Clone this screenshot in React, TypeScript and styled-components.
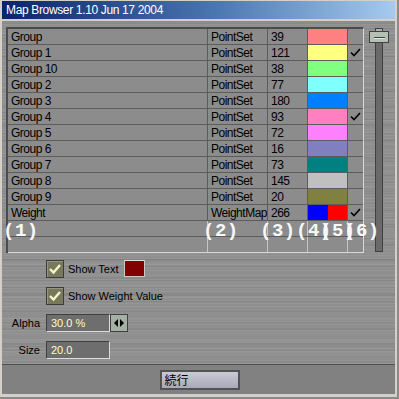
import React from 'react';
import styled, { createGlobalStyle } from 'styled-components';

const Global = createGlobalStyle`
  html, body { margin: 0; padding: 0; background: #d4d0c8; }
  body { width: 399px; height: 399px; overflow: hidden; }
`;

const Window = styled.div`
  box-sizing: border-box;
  width: 399px;
  height: 399px;
  background: #d4d0c8;
  padding: 1px 2px 3px 2px;
  border-right: 2px solid #8a8a8a;
  border-bottom: 2px solid #8a8a8a;
  display: flex;
  flex-direction: column;
  font-family: "Liberation Sans", Arial, sans-serif;
`;

const TitleBar = styled.div`
  height: 18px;
  margin-bottom: 2px;
  padding-left: 4px;
  background: linear-gradient(90deg, #0a246a 0%, #4a78b0 55%, #a6caf0 100%);
  color: #ffffff;
  font-size: 12px;
  letter-spacing: -0.35px;
  line-height: 18px;
  white-space: nowrap;
`;

const Body = styled.div`
  flex: 1;
  display: flex;
  flex-direction: column;
  background-color: #8f8f8f;
  background-image:
    repeating-linear-gradient(180deg, rgba(255,255,255,0.05) 0px, rgba(255,255,255,0.05) 1px, transparent 1px, transparent 3px),
    repeating-linear-gradient(180deg, rgba(0,0,0,0.06) 0px, rgba(0,0,0,0.06) 1px, transparent 1px, transparent 7px),
    repeating-linear-gradient(180deg, rgba(255,255,255,0.04) 0px, rgba(255,255,255,0.04) 2px, transparent 2px, transparent 11px),
    repeating-linear-gradient(180deg, rgba(0,0,0,0.04) 0px, rgba(0,0,0,0.04) 3px, transparent 3px, transparent 17px);
`;

const ListArea = styled.div`
  display: flex;
  gap: 5px;
  margin: 6px 0 0 4px;
`;

const Table = styled.div`
  position: relative;
  box-sizing: border-box;
  width: 358px;
  background: #8c8c8c;
  border-top: 2px solid #4c4c4c;
  border-left: 2px solid #4c4c4c;
  border-right: 1px solid #d8d8d8;
`;

const Row = styled.div<{ $last?: boolean }>`
  box-sizing: border-box;
  display: grid;
  grid-template-columns: 200px 60px 40px 40px 15px;
  height: 16px;
  border-bottom: 1px solid ${(p) => (p.$last ? '#d8d8d8' : '#5c5c5c')};
`;

const Cell = styled.div<{ $empty?: boolean; $end?: boolean }>`
  box-sizing: border-box;
  border-right: ${(p) => (p.$end ? 'none' : `1px solid ${p.$empty ? '#c4c4c4' : '#5c5c5c'}`)};
  padding-left: 3px;
  font-size: 12px;
  letter-spacing: -0.5px;
  line-height: 15px;
  color: #000;
  white-space: nowrap;
  overflow: hidden;
  display: flex;
  align-items: center;
  padding-top: 1px;
`;

const ColorCell = styled.div`
  box-sizing: border-box;
  border-right: 1px solid #5c5c5c;
  display: flex;
`;

const Swatch = styled.div<{ $c: string }>`
  flex: 1;
  background: ${(p) => p.$c};
`;

const CheckCell = styled.div`
  display: flex;
  align-items: center;
  justify-content: center;
`;

const Annot = styled.div<{ $x: number }>`
  position: absolute;
  top: 193px;
  left: ${(p) => p.$x}px;
  font-family: "Liberation Mono", "DejaVu Sans Mono", monospace;
  font-weight: bold;
  font-size: 19px;
  line-height: 18px;
  letter-spacing: 0.5px;
  color: #f8f8f8;
  white-space: nowrap;
`;

const Scroll = styled.div`
  width: 20px;
  display: flex;
  flex-direction: column;
  align-items: center;
  margin: 1px 0 1px 0;
`;

const ScrollTab = styled.div`
  box-sizing: border-box;
  width: 8px;
  height: 3px;
  border: 1px solid #404040;
  border-bottom: none;
  background: #aab6aa;
`;

const Thumb = styled.div`
  box-sizing: border-box;
  width: 20px;
  height: 12px;
  border: 1px solid #404040;
  background: #b4c0b4;
  display: flex;
  align-items: center;
  justify-content: center;
  &::after {
    content: '';
    width: 11px;
    height: 1px;
    background: #404040;
    box-shadow: 0 1px 0 #e0e8e0;
  }
`;

const Track = styled.div`
  box-sizing: border-box;
  flex: 1;
  width: 8px;
  background: #6a6a6a;
  border: 1px solid #404040;
  border-top: none;
`;

const Controls = styled.div`
  display: grid;
  grid-template-columns: 38px auto;
  column-gap: 6px;
  row-gap: 9px;
  margin-top: 7px;
  justify-content: start;
`;

const Label = styled.div`
  grid-column: 1;
  font-size: 11px;
  line-height: 18px;
  color: #000;
  text-align: right;
`;

const Line = styled.div`
  grid-column: 2;
  display: flex;
  align-items: center;
  height: 18px;
`;

const CheckBox = styled.div`
  box-sizing: border-box;
  width: 18px;
  height: 18px;
  border: 1px solid #3c3c3c;
  background: #78785f;
  box-shadow: inset 1px 1px 0 #96967e;
  display: flex;
  align-items: center;
  justify-content: center;
  margin-right: 4px;
`;

const CheckText = styled.span`
  font-size: 11px;
  color: #000;
  line-height: 18px;
  margin-right: 5px;
`;

const ColorBox = styled.div<{ $c: string }>`
  box-sizing: border-box;
  width: 21px;
  height: 17px;
  margin-top: -1px;
  background: ${(p) => p.$c};
  border: 1px solid #c8c8c8;
  border-top-color: #e0e0e0;
`;

const Input = styled.div`
  box-sizing: border-box;
  width: 64px;
  height: 18px;
  background: #6e6e6e;
  border-top: 1px solid #404040;
  border-left: 1px solid #404040;
  border-right: 1px solid #dcdcdc;
  border-bottom: 1px solid #dcdcdc;
  color: #ffffc0;
  font-size: 11px;
  line-height: 16px;
  padding-left: 4px;
`;

const ArrowButton = styled.div`
  box-sizing: border-box;
  width: 18px;
  height: 18px;
  background: #a4b0a4;
  border: 1px solid #404040;
  display: flex;
  align-items: center;
  justify-content: center;
`;

const Spacer = styled.div`
  flex: 1;
`;

const BottomBar = styled.div`
  box-sizing: border-box;
  height: 30px;
  border-top: 1px solid #505050;
  background: #818181;
  display: flex;
  justify-content: center;
  padding: 5px 0 0 2px;
`;

const Button = styled.div`
  box-sizing: border-box;
  width: 80px;
  height: 20px;
  border: 2px solid #525252;
  background: linear-gradient(180deg, #cacad6 0%, #a8a8b8 100%);
  font-family: "Noto Sans CJK JP", "Liberation Sans", sans-serif;
  font-size: 12px;
  line-height: 16px;
  color: #000;
  padding-left: 3px;
`;

type RowData = { name: string; type: string; n: string; colors: string[]; check: boolean };

const rows: RowData[] = [
  { name: 'Group', type: 'PointSet', n: '39', colors: ['#ff8080'], check: false },
  { name: 'Group 1', type: 'PointSet', n: '121', colors: ['#ffff80'], check: true },
  { name: 'Group 10', type: 'PointSet', n: '38', colors: ['#80ff80'], check: false },
  { name: 'Group 2', type: 'PointSet', n: '77', colors: ['#80ffff'], check: false },
  { name: 'Group 3', type: 'PointSet', n: '180', colors: ['#0080ff'], check: false },
  { name: 'Group 4', type: 'PointSet', n: '93', colors: ['#ff80c0'], check: true },
  { name: 'Group 5', type: 'PointSet', n: '72', colors: ['#ff80ff'], check: false },
  { name: 'Group 6', type: 'PointSet', n: '16', colors: ['#8080c0'], check: false },
  { name: 'Group 7', type: 'PointSet', n: '73', colors: ['#008080'], check: false },
  { name: 'Group 8', type: 'PointSet', n: '145', colors: ['#c0c0c0'], check: false },
  { name: 'Group 9', type: 'PointSet', n: '20', colors: ['#808040'], check: false },
  { name: 'Weight', type: 'WeightMap', n: '266', colors: ['#0000ff', '#ff0000'], check: true },
];

const Tick = () => (
  <svg width="11" height="9" viewBox="0 0 11 9">
    <path d="M1 4.5 L4 7.5 L10 1" fill="none" stroke="#000" strokeWidth="1.6" />
  </svg>
);

const BoxTick = () => (
  <svg width="14" height="12" viewBox="0 0 14 12">
    <path d="M2 6 L5.5 9.5 L12 2" fill="none" stroke="#f6f6c4" strokeWidth="2.4" />
  </svg>
);

const Arrows = () => (
  <svg width="12" height="8" viewBox="0 0 12 8">
    <path d="M5 0 L5 8 L1 4 Z" fill="#000" />
    <path d="M7 0 L7 8 L11 4 Z" fill="#000" />
  </svg>
);

export default function App() {
  return (
    <>
      <Global />
      <Window>
        <TitleBar>Map Browser 1.10 Jun 17 2004</TitleBar>
        <Body>
          <ListArea>
            <Table>
              {rows.map((r) => (
                <Row key={r.name}>
                  <Cell>{r.name}</Cell>
                  <Cell>{r.type}</Cell>
                  <Cell>{r.n}</Cell>
                  <ColorCell>
                    {r.colors.map((c) => (
                      <Swatch key={c} $c={c} />
                    ))}
                  </ColorCell>
                  <CheckCell>{r.check ? <Tick /> : null}</CheckCell>
                </Row>
              ))}
              {[0, 1].map((i) => (
                <Row key={`e${i}`} $last={i === 1}>
                  <Cell $empty />
                  <Cell $empty />
                  <Cell $empty />
                  <Cell $empty />
                  <Cell $empty $end />
                </Row>
              ))}
              <Annot $x={-5}>(1)</Annot>
              <Annot $x={195}>(2)</Annot>
              <Annot $x={252}>(3)</Annot>
              <Annot $x={288}>(4)</Annot>
              <Annot $x={312}>(5)</Annot>
              <Annot $x={336}>(6)</Annot>
            </Table>
            <Scroll>
              <ScrollTab />
              <Thumb />
              <Track />
            </Scroll>
          </ListArea>
          <Controls>
            <Line>
              <CheckBox>
                <BoxTick />
              </CheckBox>
              <CheckText>Show Text</CheckText>
              <ColorBox $c="#800000" />
            </Line>
            <Line>
              <CheckBox>
                <BoxTick />
              </CheckBox>
              <CheckText>Show Weight Value</CheckText>
            </Line>
            <Label>Alpha</Label>
            <Line>
              <Input>30.0 %</Input>
              <ArrowButton>
                <Arrows />
              </ArrowButton>
            </Line>
            <Label>Size</Label>
            <Line>
              <Input>20.0</Input>
            </Line>
          </Controls>
          <Spacer />
          <BottomBar>
            <Button>続行</Button>
          </BottomBar>
        </Body>
      </Window>
    </>
  );
}
